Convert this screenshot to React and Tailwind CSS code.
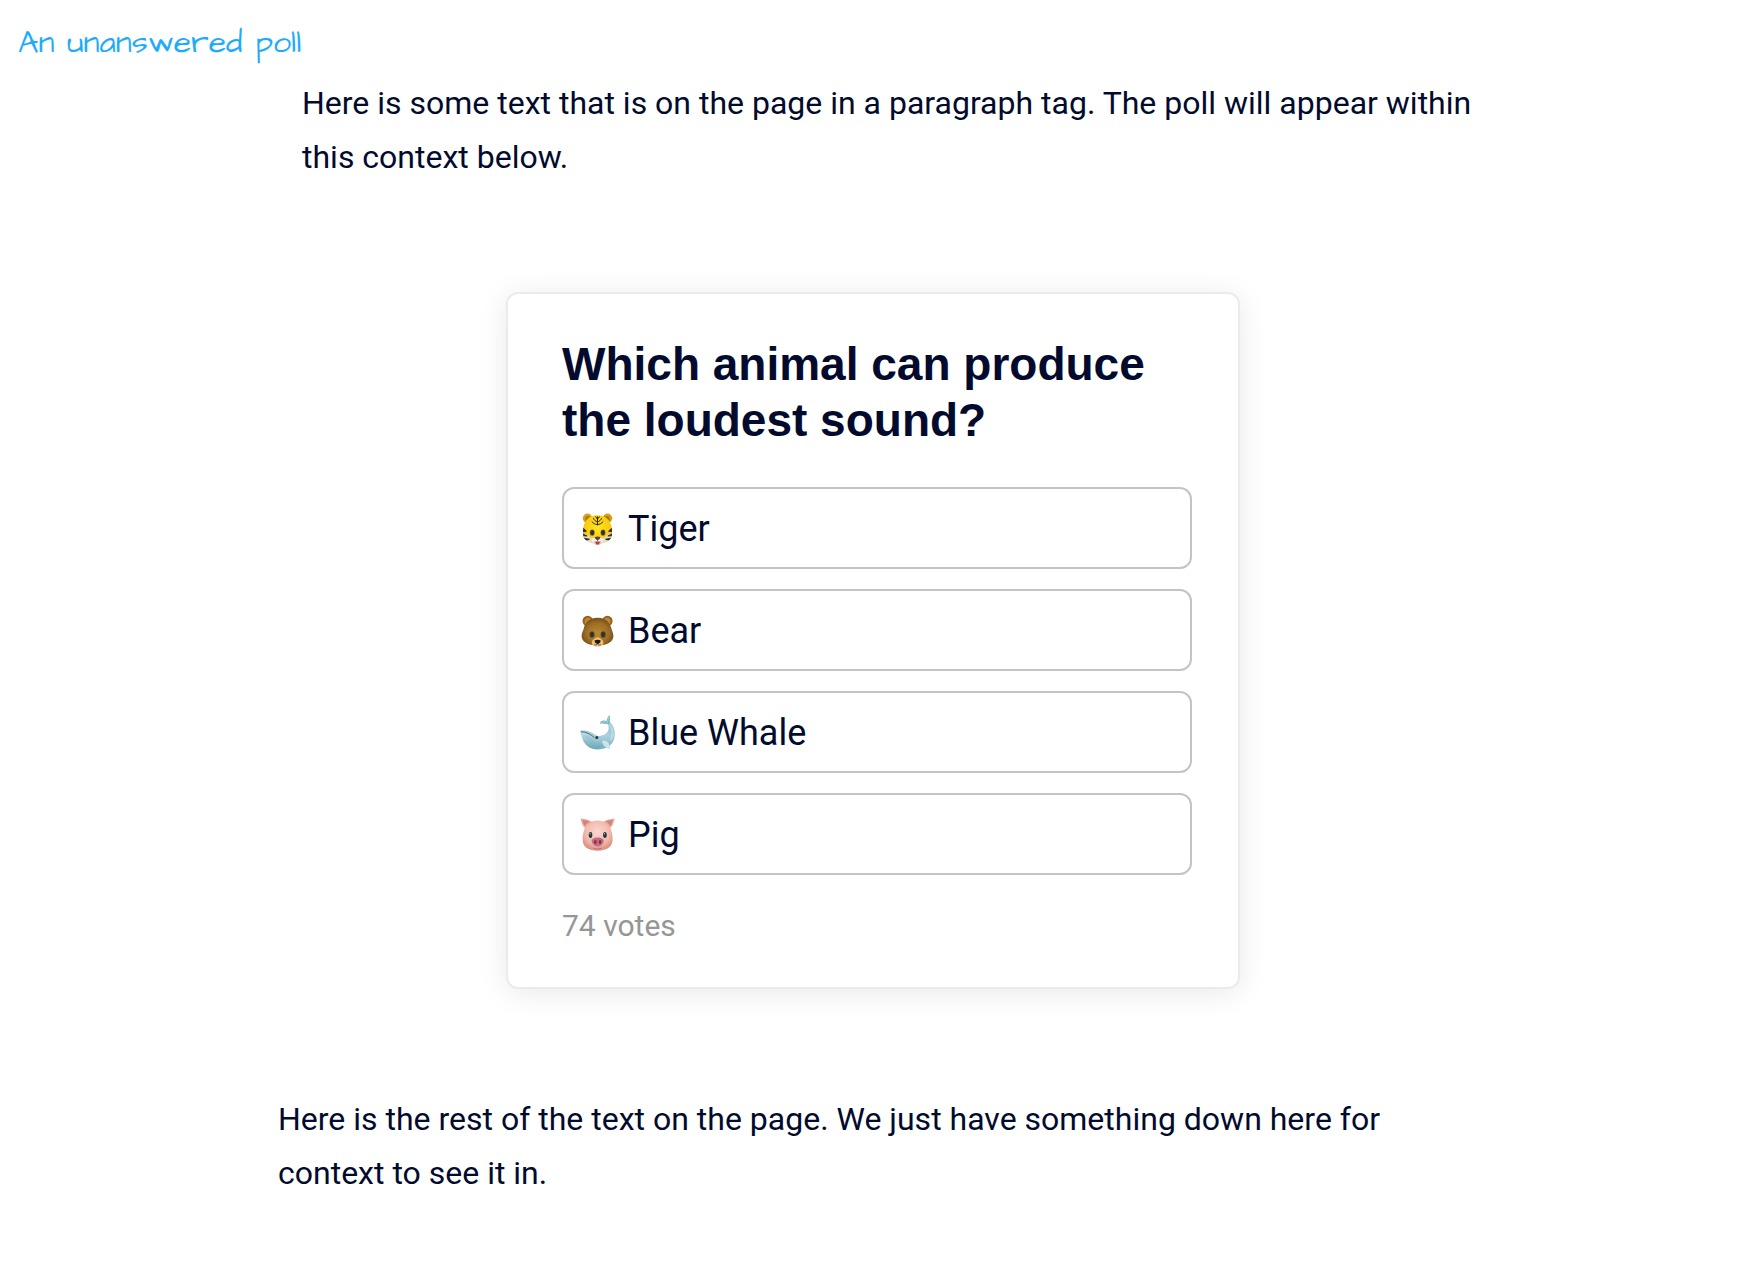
function TigerIcon() {
  return (
    <svg viewBox="0 0 36 36" className="size-9 shrink-0" aria-hidden="true">
      <defs>
        <radialGradient id="tiger-face" cx="50%" cy="40%" r="60%">
          <stop offset="0" stopColor="#ffe51f" />
          <stop offset="0.7" stopColor="#fbcb12" />
          <stop offset="1" stopColor="#e59a10" />
        </radialGradient>
        <clipPath id="tiger-clip">
          <path d="M17.5 4.2C25.6 4.2 31 9.6 31.7 17.5c.5 4 .7 8-1.5 10.600-2.600 3-6.600 3.400-8.900 4.400-2.500 1.700-5.100 1.700-7.600 0-2.300-1-6.300-1.400-8.900-4.400-2.200-2.600-2-6.600-1.500-10.600C4 9.600 9.400 4.200 17.500 4.200z" />
        </clipPath>
      </defs>
      <circle cx="7.500" cy="7.200" r="4.700" fill="#d9a010" />
      <circle cx="27.500" cy="7.200" r="4.700" fill="#d9a010" />
      <circle cx="8.300" cy="8" r="3.100" fill="#a9781a" />
      <circle cx="26.700" cy="8" r="3.100" fill="#a9781a" />
      <path d="M17.5 4.200C25.600 4.200 31 9.600 31.700 17.500c.5 4 .7 8-1.500 10.600-2.600 3-6.600 3.400-8.900 4.400-2.500 1.700-5.100 1.700-7.600 0-2.300-1-6.300-1.400-8.900-4.400-2.200-2.600-2-6.600-1.500-10.600C4 9.600 9.400 4.200 17.500 4.200z" fill="url(#tiger-face)" />
      <g clipPath="url(#tiger-clip)">
        <path d="M2 23c4-1 6 .5 7.500 3 1.500 1.500 4 1 5.500 1h5c1.500 0 4 .5 5.500-1 1.500-2.500 3.500-4 7.500-3v12H2z" fill="#e6dccb" />
        <path d="M2.500 16.500l4 3.700-4.100.4zM2 22.500l5.200 2.500-5-.2zM3 27l6.500 1.200-5 1.600zM32.500 16.500l-4 3.700 4.100.4zM33 22.500l-5.200 2.500 5-.2zM32 27l-6.500 1.200 5 1.600z" fill="#25221d" stroke="#25221d" strokeWidth=".8" />
      </g>
      <g fill="none" stroke="#29270f" strokeWidth="1" strokeLinecap="round">
        <path d="M17.500 5.800v8.200M15.700 5.800l1.800 2.400 1.800-2.400M13.500 7.500c.8 1.800 2.200 2.900 4 3.400 1.800-.5 3.200-1.600 4-3.400M12 10.800c1.700 1.900 3.600 2.700 5.500 2.700s3.800-.8 5.500-2.700" />
      </g>
      <ellipse cx="12.200" cy="21.700" rx="2.500" ry="3.100" fill="#8c7530" />
      <ellipse cx="23" cy="21.700" rx="2.500" ry="3.100" fill="#8c7530" />
      <ellipse cx="12.200" cy="21.600" rx="1.900" ry="2.600" fill="#25313a" />
      <ellipse cx="23" cy="21.600" rx="1.900" ry="2.600" fill="#25313a" />
      <ellipse cx="15.300" cy="29" rx="3.500" ry="2.500" fill="#f5f0e9" />
      <ellipse cx="19.900" cy="29" rx="3.500" ry="2.500" fill="#f5f0e9" />
      <path d="M15.500 31h4.200c0 1.700-.8 2.600-2.100 2.600s-2.100-.9-2.100-2.600z" fill="#d62f45" />
      <path d="M14.700 26.200c1.600-.8 4.200-.8 5.800 0-.4 1.600-1.500 2.600-2.900 2.900-1.400-.3-2.500-1.300-2.900-2.900z" fill="#57403b" />
      <path d="M17.600 28.500v1.700m-3 .6c1.200.5 2.400.2 3-.6.600.8 1.800 1.100 3 .6" fill="none" stroke="#57403b" strokeWidth=".7" />
    </svg>
  );
}

function BearIcon() {
  return (
    <svg viewBox="0 0 36 36" className="size-9 shrink-0" aria-hidden="true">
      <defs>
        <radialGradient id="bear-face" cx="50%" cy="55%" r="58%">
          <stop offset="0" stopColor="#b98836" />
          <stop offset="0.600" stopColor="#9e6f24" />
          <stop offset="1" stopColor="#6f4916" />
        </radialGradient>
      </defs>
      <circle cx="7.700" cy="8" r="5.200" fill="#92611f" />
      <circle cx="27.400" cy="8" r="5.200" fill="#92611f" />
      <circle cx="8.200" cy="8.400" r="3.600" fill="#c08536" />
      <circle cx="26.900" cy="8.400" r="3.600" fill="#c08536" />
      <path d="M17.600 4.700c7.700 0 12.600 4.700 13.700 10.500.5 2.300 2.100 4.400 2.100 7.700 0 5.700-5.800 9.400-15.800 9.400S1.600 28.600 1.600 22.900c0-3.300 1.700-5.400 2.200-7.700C4.900 9.400 9.900 4.700 17.600 4.700z" fill="url(#bear-face)" />
      <ellipse cx="12" cy="21.500" rx="2.600" ry="3.300" fill="#765019" />
      <ellipse cx="23.200" cy="21.500" rx="2.600" ry="3.300" fill="#765019" />
      <ellipse cx="12" cy="21.500" rx="1.900" ry="2.700" fill="#26333d" />
      <ellipse cx="23.200" cy="21.500" rx="1.900" ry="2.700" fill="#26333d" />
      <path d="M17.600 24.200c1.800 0 2.800 1.200 4.100 2.300 1.200.9 1.900 2 1.700 3.400-.3 2.500-2.900 3.700-5.800 3.700s-5.500-1.200-5.800-3.700c-.2-1.400.5-2.500 1.700-3.400 1.300-1.100 2.300-2.300 4.100-2.300z" fill="#eebd76" />
      <path d="M14.600 27.400c1.500-1 4.500-1 6 0 .3 1.500-1.200 3-3 3.700-1.800-.7-3.300-2.200-3-3.700z" fill="#17191c" />
      <path d="M14.600 31.800c1.200.6 2.400.3 3-.7.600 1 1.800 1.300 3 .7" fill="none" stroke="#65411c" strokeWidth=".8" strokeLinecap="round" />
    </svg>
  );
}

function WhaleIcon() {
  return (
    <svg viewBox="0 0 36 36" className="size-9 shrink-0" aria-hidden="true">
      <defs>
        <linearGradient id="whale-body" x1="0" y1="0" x2="0" y2="1">
          <stop offset="0" stopColor="#8bbecd" />
          <stop offset="0.500" stopColor="#abd0dc" />
          <stop offset="1" stopColor="#79afc0" />
        </linearGradient>
        <linearGradient id="whale-belly" x1="0" y1="0" x2="0" y2="1">
          <stop offset="0" stopColor="#c4dfe8" />
          <stop offset="1" stopColor="#68a8b7" />
        </linearGradient>
      </defs>
      <path d="M.5 15.700c4.700-.9 10.500.4 15 4.400 2.600 1.300 5.500 1.100 8.600-.3 4.600-2.200 6-7 3.300-11.700l2.200-1.300C34 11 36.300 17.500 34 24.500 31.700 31 25 34.700 17.200 34.500 10 34.300 4.400 30 2.500 23.500 1.900 20.500-.2 18 .5 15.700z" fill="url(#whale-body)" />
      <path d="M1 17.600c3.500 0 8.500 2 13.500 6.200 2.500 2.300 6 4 10 4.800-2.700 4-5.500 5.400-9.500 5.200C8.300 33 4 28.600 2.500 23.500 1.900 21.500 1.200 19.800 1 17.600z" fill="url(#whale-belly)" />
      <path d="M4 20.500c4.500 2.300 7.500 6 10.500 12.600M7 20.500c4.300 3 7.500 7 9.500 12.500M4 24.500c2.500 2 4.500 4.500 6 8" fill="none" stroke="#81b1bf" strokeWidth=".5" />
      <path d="M1.300 16.700c4.700.2 8.700 2.100 12.700 5.500" fill="none" stroke="#507684" strokeWidth="1" strokeLinecap="round" />
      <path d="M27.300 9.200c-2.600-.3-5-1.200-7-.4-.7-1.600.6-3.100 2.800-3.400 1.300-.1 2.500.1 3.500.6.500-2.400 1.300-4.300 3.100-6 .5 2.600.3 5.500-.2 7.800z" fill="#77b6c3" />
      <path d="M21.300 7.800c1.600-1.300 3.800-1.300 5.900-.2.600-2 1.200-4 2.100-5.700" fill="none" stroke="#a6d2dc" strokeWidth=".9" />
      <path d="M30.200 10c3 5.500 3 10.400.8 14.500" fill="none" stroke="#c7e2e9" strokeWidth="2" strokeLinecap="round" opacity=".7" />
      <path d="M22.500 25.500c2.300-.4 5 .5 6.100 2.600.9 1.900 1.400 3.900 1.700 6-2.600-.4-5.400-2-7.200-4.700-.8-1.300-1.100-2.700-.6-3.900z" fill="#cbe3ed" />
      <circle cx="16.800" cy="22.400" r="1.500" fill="#25343c" />
    </svg>
  );
}

function PigIcon() {
  return (
    <svg viewBox="0 0 36 36" className="size-9 shrink-0" aria-hidden="true">
      <defs>
        <radialGradient id="pig-face" cx="50%" cy="38%" r="62%">
          <stop offset="0" stopColor="#fbd6cf" />
          <stop offset="0.650" stopColor="#f3b9ad" />
          <stop offset="1" stopColor="#d98e80" />
        </radialGradient>
      </defs>
      <path d="M17.600 3.600c6.700 0 11.800 3.600 13.500 9.400 1.100 3.700 1.900 7.700 1.300 11.600-.9 6-6.300 9.200-14.800 9.200S3.700 30.600 2.800 24.600C2.200 20.700 3 16.700 4.100 13 5.800 7.200 10.900 3.600 17.600 3.600z" fill="url(#pig-face)" />
      <path d="M.4 1.400c4.500.7 8.500 1.100 11.600 3.500C8.500 6.700 6.500 8.400 5.300 11 2.300 9 1.600 5 .4 1.400z" fill="#eba99b" />
      <path d="M34.800 1.400c-4.500.7-8.500 1.100-11.600 3.500 3.500 1.800 5.500 3.500 6.700 6.100 3-2 3.700-6 4.900-9.600z" fill="#eba99b" />
      <path d="M2.400 2.800c2.800.7 5 .9 7 2-2 1.100-3.500 2.400-4.500 4.300-1.500-1.600-1.900-4-2.500-6.300zM32.800 2.800c-2.800.7-5 .9-7 2 2 1.100 3.500 2.400 4.500 4.300 1.500-1.600 1.900-4 2.500-6.300z" fill="#cf8478" />
      <ellipse cx="10.500" cy="18" rx="2.300" ry="3.200" fill="#f7e9e3" />
      <ellipse cx="24.900" cy="18" rx="2.300" ry="3.200" fill="#f7e9e3" />
      <ellipse cx="10.500" cy="18" rx="1.900" ry="2.900" fill="#29333b" />
      <ellipse cx="24.900" cy="18" rx="1.900" ry="2.900" fill="#29333b" />
      <circle cx="10.100" cy="16.800" r=".6" fill="#fff" />
      <circle cx="24.500" cy="16.800" r=".6" fill="#fff" />
      <path d="M17.700 20.600c3.800 0 6.300 1.600 6 3.900-.2 1.400-1 2-1.700 3.100-.9 1.300-2.400 1.900-4.300 1.900s-3.400-.6-4.300-1.900c-.7-1.100-1.500-1.700-1.700-3.100-.3-2.300 2.200-3.900 6-3.900z" fill="#c66b80" />
      <ellipse cx="15.300" cy="25" rx="1.300" ry="1.900" fill="#832f46" />
      <ellipse cx="20.100" cy="25" rx="1.300" ry="1.900" fill="#832f46" />
      <path d="M14 31.300c2.200 1 5.200 1 7.400 0" fill="none" stroke="#b4685f" strokeWidth=".9" strokeLinecap="round" />
    </svg>
  );
}

const options = [
  { label: "Tiger", Icon: TigerIcon },
  { label: "Bear", Icon: BearIcon },
  { label: "Blue Whale", Icon: WhaleIcon },
  { label: "Pig", Icon: PigIcon },
];

export default function App() {
  return (
    <div className="min-h-screen bg-white pb-16 font-['Roboto',sans-serif] text-[#020b2d]">
      <header className="px-[18px] pt-[21px] font-['Architects_Daughter',cursive] text-[32px] leading-[44px] text-[#1eabff]">
        An unanswered poll
      </header>
      <main>
        <p className="mx-auto mt-[11px] max-w-[1208px] pl-6 text-[32px] leading-[54px]">
          Here is some text that is on the page in a paragraph tag. The poll will appear within this context below.
        </p>
        <div className="mt-[108px] pr-[18px]">
          <section
            aria-labelledby="poll-question"
            className="mx-auto max-w-[734px] rounded-xl border-2 border-[#ebebeb] bg-white pt-[42px] pr-[46px] pb-[34px] pl-[54px] shadow-[0_4px_30px_rgba(0,0,0,0.09)]"
          >
            <h1 id="poll-question" className="font-['Liberation_Sans',Arial,sans-serif] text-[46px] leading-[56px] font-bold">
              Which animal can produce the loudest sound?
            </h1>
            <div className="mt-[39px] flex flex-col gap-5">
              {options.map(({ label, Icon }) => (
                <button
                  key={label}
                  type="button"
                  className="flex h-[82px] items-center gap-3 rounded-xl border-2 border-[#c4c4c4] px-4 pt-0.5 text-left text-[36px] leading-[44px]"
                >
                  <Icon />
                  {label}
                </button>
              ))}
            </div>
            <p className="mt-6 text-[30px] leading-[54px] text-[#969696]">74 votes</p>
          </section>
        </div>
        <p className="mx-auto mt-[103px] max-w-[1208px] pr-12 text-[32px] leading-[54px]">
          Here is the rest of the text on the page. We just have something down here for context to see it in.
        </p>
      </main>
    </div>
  );
}
